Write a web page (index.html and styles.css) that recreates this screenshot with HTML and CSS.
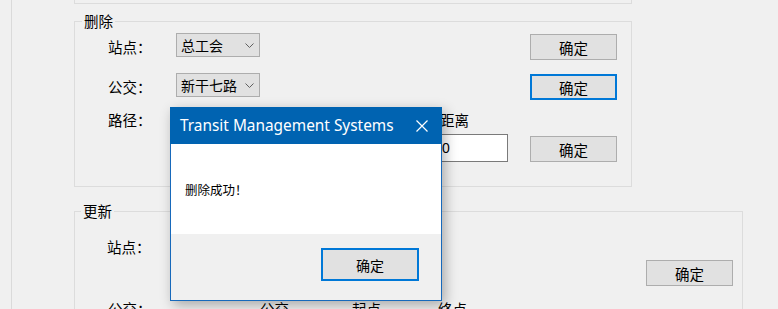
FILE: index.html
```html
<!DOCTYPE html>
<html lang="zh-CN">
<head>
  <meta charset="UTF-8" />
  <title>Transit Management Systems</title>
  <link rel="stylesheet" href="styles.css">
</head>
<body>

  <div class="frame">
    <div class="group cut"></div>

    <div class="group del">
      <span class="legend">删除</span>
      <div class="row">
        <span class="label">站点：</span>
        <div class="combo"><span class="combo-text">总工会</span>
          <svg class="caret" width="9" height="5" viewBox="0 0 9 5"><polyline points="0.5,0.5 4.5,4.5 8.5,0.5" fill="none" stroke="#606060" stroke-width="1"/></svg>
        </div>
        <button class="btn">确定</button>
      </div>
      <div class="row">
        <span class="label">公交：</span>
        <div class="combo"><span class="combo-text">新干七路</span>
          <svg class="caret" width="9" height="5" viewBox="0 0 9 5"><polyline points="0.5,0.5 4.5,4.5 8.5,0.5" fill="none" stroke="#606060" stroke-width="1"/></svg>
        </div>
        <button class="btn focus">确定</button>
      </div>
      <div class="row path">
        <span class="label">路径：</span>
        <div class="dist">
          <span class="dist-label">距离</span>
          <input class="textbox" type="text" value="0">
        </div>
        <button class="btn low">确定</button>
      </div>
    </div>

    <div class="group upd">
      <span class="legend">更新</span>
      <div class="row first">
        <span class="label">站点：</span>
        <button class="btn drop">确定</button>
      </div>
      <div class="row heads">
        <span class="label wide">公交：</span>
        <span class="head h-bus">公交</span>
        <span class="head h-start">起点</span>
        <span class="head">终点</span>
      </div>
    </div>
  </div>

  <div class="dialog">
    <div class="dialog-title">
      <span>Transit Management Systems</span>
      <svg class="close" width="12" height="12" viewBox="0 0 12 12"><path d="M0.5 0.5 L11.5 11.5 M11.5 0.5 L0.5 11.5" stroke="#fff" stroke-width="1.2" fill="none"/></svg>
    </div>
    <div class="dialog-body">删除成功！</div>
    <div class="dialog-footer">
      <button class="btn ok">确定</button>
    </div>
  </div>

</body>
</html>
```

FILE: styles.css
```css
body {
  margin: 0;
  width: 778px;
  height: 309px;
  overflow: hidden;
  position: relative;
  background: #f0f0f0;
  color: #000;
  font-family: "Noto Sans CJK SC", sans-serif;
  font-size: 14.5px;
}
.frame {
  margin-left: 11px;
  border-left: 1px solid #dadada;
  height: 309px;
  padding-left: 62px;
}
.group {
  position: relative;
  box-sizing: border-box;
  border: 1px solid #dcdcdc;
}
.cut {
  width: 558px;
  height: 4px;
  border-top: none;
}
.del {
  width: 558px;
  height: 166px;
  margin-top: 17px;
  padding: 11px 14px 0 33px;
}
.upd {
  width: 669px;
  height: 130px;
  margin-top: 24px;
  padding: 21px 9px 0 32px;
}
.legend {
  position: absolute;
  top: -9px;
  left: 7px;
  padding: 0 2px;
  line-height: 16px;
  background: #f0f0f0;
}
.upd .legend {
  left: 6px;
}
.row {
  display: flex;
  align-items: flex-start;
  height: 27px;
}
.row + .row {
  margin-top: 13px;
}
.label {
  flex: none;
  width: 68px;
  line-height: 27px;
}
.combo {
  display: flex;
  align-items: center;
  box-sizing: border-box;
  width: 84px;
  height: 24px;
  padding-left: 4px;
  border: 1px solid #adadad;
  background: #e1e1e1;
  font-size: 14px;
  white-space: nowrap;
  overflow: hidden;
}
.caret {
  flex: none;
  margin-left: auto;
  margin-right: 5px;
}
.btn {
  box-sizing: border-box;
  width: 87px;
  height: 26px;
  margin: 1px 0 0 auto;
  padding: 0;
  border: 1px solid #adadad;
  background: #e1e1e1;
  color: #000;
  font: inherit;
}
.btn.focus {
  border: 2px solid #0078d7;
}
.row.path {
  height: auto;
  margin-top: 6px;
}
.dist {
  display: flex;
  flex-direction: column;
  margin-left: 262px;
}
.dist-label {
  line-height: 27px;
  margin-left: 2px;
}
.textbox {
  box-sizing: border-box;
  width: 70px;
  height: 28px;
  margin: 1px 0 0;
  padding: 0 3px;
  border: 1px solid #7a7a7a;
  background: #fff;
  font-family: "Liberation Sans", sans-serif;
  font-size: 14px;
  color: #000;
  outline: none;
}
.btn.low {
  margin-top: 30px;
}
.upd .row.first {
  height: auto;
}
.btn.drop {
  margin-top: 27px;
}
.upd .row.heads {
  margin-top: 9px;
}
.label.wide {
  width: 152px;
  margin-left: 1px;
}
.head {
  flex: none;
  line-height: 27px;
}
.h-bus {
  width: 92px;
}
.h-start {
  width: 86px;
}

/* message box */
.dialog {
  position: absolute;
  left: 170px;
  top: 107px;
  width: 272px;
  height: 194px;
  box-sizing: border-box;
  display: flex;
  flex-direction: column;
  border: 1px solid #1769bb;
  background: #f0f0f0;
  box-shadow: 3px 4px 12px rgba(0,0,0,0.3);
}
.dialog-title {
  display: flex;
  align-items: center;
  justify-content: space-between;
  height: 37px;
  padding: 0 14px 0 10px;
  margin: -1px -1px 0;
  background: #0063b1;
  color: #fff;
  font-family: "Noto Sans", sans-serif;
  font-size: 15.4px;
}
.dialog-body {
  display: flex;
  align-items: center;
  height: 90px;
  padding-left: 14px;
  background: #fff;
  font-size: 12.5px;
}
.dialog-footer {
  flex: 1;
  display: flex;
  justify-content: flex-end;
  align-items: flex-start;
  padding: 14px 22px 0 0;
}
.btn.ok {
  width: 98px;
  height: 33px;
  margin: 0;
  border: 2px solid #0078d7;
  font-size: 14px;
}
```
